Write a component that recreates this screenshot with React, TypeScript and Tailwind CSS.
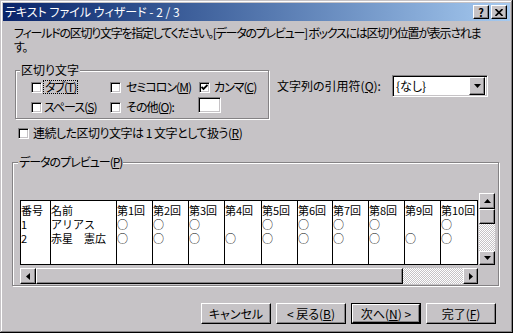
const raised =
  'box-border border border-t-white border-l-white border-b-black border-r-black bg-[#c6c3c6] shadow-[inset_-1px_-1px_#848284]';
const sunken =
  'box-border border border-t-[#848284] border-l-[#848284] border-b-white border-r-white bg-white shadow-[inset_1px_1px_#000,inset_-1px_-1px_#c6c3c6]';
const etched = 'box-border border border-[#848284] shadow-[1px_1px_#fff,inset_1px_1px_#fff]';
const dither =
  'bg-[repeating-conic-gradient(#fff_0_25%,#c6c3c6_0_50%)] bg-[length:2px_2px]';

function Check({ checked }: { checked?: boolean }) {
  return (
    <span className={`${sunken} flex h-[11px] w-[11px] shrink-0 items-center justify-center`}>
      {checked && (
        <svg width="7" height="7" viewBox="0 0 7 7">
          <path d="M0.5 3 L2.5 5 L6.5 1" stroke="#000" strokeWidth="1.8" fill="none" />
        </svg>
      )}
    </span>
  );
}

function Label({ text, u, rest }: { text: string; u: string; rest: string }) {
  return (
    <span className="whitespace-nowrap">
      {text}(<span className="underline">{u}</span>){rest}
    </span>
  );
}

function Tri({ dir }: { dir: 'up' | 'down' | 'left' | 'right' }) {
  const pts = {
    up: '3.5,0 7,4 0,4',
    down: '0,0 7,0 3.5,4',
    left: '4,0 4,7 0,3.5',
    right: '0,0 4,3.5 0,7',
  }[dir];
  const horizontal = dir === 'up' || dir === 'down';
  return (
    <svg width={horizontal ? 7 : 4} height={horizontal ? 4 : 7} viewBox={horizontal ? '0 0 7 4' : '0 0 4 7'}>
      <polygon points={pts} fill="#000" />
    </svg>
  );
}

const cols = [
  { w: 'w-[29px]', head: '番号', r1: '1', r2: '2' },
  { w: 'w-[66px]', head: '名前', r1: 'アリアス', r2: '赤星　憲広' },
  { w: 'w-[36px]', head: '第1回', r1: '○', r2: '○' },
  { w: 'w-[36px]', head: '第2回', r1: '○', r2: '○' },
  { w: 'w-[36px]', head: '第3回', r1: '○', r2: '○' },
  { w: 'w-[37px]', head: '第4回', r1: '', r2: '○' },
  { w: 'w-[36px]', head: '第5回', r1: '○', r2: '○' },
  { w: 'w-[35px]', head: '第6回', r1: '○', r2: '○' },
  { w: 'w-[36px]', head: '第7回', r1: '○', r2: '○' },
  { w: 'w-[36px]', head: '第8回', r1: '○', r2: '○' },
  { w: 'w-[36px]', head: '第9回', r1: '', r2: '○' },
  { w: 'w-[37px]', head: '第10回', r1: '○', r2: '○' },
];

export default function App() {
  return (
    <div className="box-border h-[333px] w-[513px] overflow-hidden bg-[#c6c3c6] p-[3px] font-['Noto_Sans_CJK_JP',sans-serif] text-[12px] leading-[14px] text-black shadow-[inset_-1px_-1px_#000,inset_1px_1px_#c6c3c6,inset_-2px_-2px_#848284,inset_2px_2px_#fff] [font-feature-settings:'palt']">
      {/* Title bar */}
      <div className="flex h-[18px] items-center bg-gradient-to-r from-[#0a246a] to-[#a6caf0] pr-[3px] pl-[2px]">
        <span className="flex-1 whitespace-nowrap text-white">テキスト ファイル ウィザード - 2 / 3</span>
        <div className={`${raised} flex h-[14px] w-[16px] items-center justify-center text-[11px] font-bold leading-none`}>?</div>
        <div className={`${raised} ml-[2px] flex h-[14px] w-[16px] items-center justify-center`}>
          <svg width="8" height="7" viewBox="0 0 8 7">
            <path d="M0.5 0 L7.5 7 M7.5 0 L0.5 7" stroke="#000" strokeWidth="1.6" />
          </svg>
        </div>
      </div>

      {/* Instruction */}
      <p className="mt-[5px] ml-[11px] whitespace-nowrap tracking-[-1.25px]">
        フィールドの区切り文字を指定してください。[データのプレビュー] ボックスには区切り位置が表示されま
        <br />
        す。
      </p>

      {/* Delimiters + quote */}
      <div className="mt-[16px] flex">
        <div className={`${etched} relative ml-[12px] h-[49px] w-[254px] tracking-[-1px]`}>
          <span className="absolute -top-[8px] left-[4px] bg-[#c6c3c6] px-[1px] tracking-normal">区切り文字</span>
          <div className="grid grid-cols-[79px_89px_80px] pt-[9px] pl-[15px]">
            <div className="flex h-[14px] items-center gap-[1px]">
              <Check />
              <span className="border border-dotted border-black px-[1px] leading-[12px]">
                <Label text="タブ" u="T" rest="" />
              </span>
            </div>
            <div className="flex h-[14px] items-center gap-[5px]">
              <Check />
              <Label text="セミコロン" u="M" rest="" />
            </div>
            <div className="flex h-[14px] items-center gap-[4px]">
              <Check checked />
              <Label text="カンマ" u="C" rest="" />
            </div>
            <div className="mt-[6px] flex h-[14px] items-center gap-[2px]">
              <Check />
              <Label text="スペース" u="S" rest="" />
            </div>
            <div className="mt-[6px] flex h-[14px] items-center gap-[5px]">
              <Check />
              <Label text="その他" u="O" rest=":" />
            </div>
            <div className={`${sunken} mt-[3px] -ml-[1px] h-[16px] w-[23px]`} />
          </div>
        </div>

        <div className="mt-[5px] ml-[8px] flex h-[22px] items-center">
          <span className="w-[115px]">
            <Label text="文字列の引用符" u="Q" rest=":" />
          </span>
          <div className={`${sunken} flex h-[22px] w-[96px] items-center justify-between pr-[2px] pl-[3px]`}>
            <span>{'{なし}'}</span>
            <div className={`${raised} flex h-[18px] w-[16px] items-center justify-center`}>
              <Tri dir="down" />
            </div>
          </div>
        </div>
      </div>

      {/* Consecutive delimiters */}
      <div className="mt-[7px] ml-[15px] flex h-[14px] items-center gap-[4px] tracking-[-0.5px]">
        <Check />
        <Label text="連続した区切り文字は 1 文字として扱う" u="R" rest="" />
      </div>

      {/* Preview */}
      <div className={`${etched} relative mt-[22px] ml-[9px] h-[124px] w-[487px]`}>
        <span className="absolute -top-[8px] left-[5px] bg-[#c6c3c6] px-[1px] tracking-[-1px]">
          <Label text="データのプレビュー" u="P" rest="" />
        </span>
        <div className="flex items-end gap-[1px] pt-[30px] pl-[7px]">
          <div className="box-border flex h-[65px] w-[458px] border border-black bg-white text-[11px] [font-feature-settings:normal]">
            {cols.map((c, i) => (
              <div
                key={c.head}
                className={`${c.w} box-border shrink-0 overflow-hidden pt-[2px] whitespace-nowrap ${i > 0 ? 'border-l border-black' : ''}`}
              >
                <div className="h-[14px]">{c.head}</div>
                <div className="h-[14px]">{c.r1}</div>
                <div className="h-[14px]">{c.r2}</div>
              </div>
            ))}
          </div>
          <div className="flex h-[72px] w-[16px] flex-col">
            <div className={`${raised} flex h-[16px] items-center justify-center`}>
              <Tri dir="up" />
            </div>
            <div className={`${raised} h-[15px]`} />
            <div className={`${dither} flex-1`} />
            <div className={`${raised} flex h-[14px] items-center justify-center`}>
              <Tri dir="down" />
            </div>
          </div>
        </div>
        <div className="mt-[3px] ml-[7px] flex h-[16px] w-[458px]">
          <div className={`${raised} flex w-[16px] items-center justify-center`}>
            <Tri dir="left" />
          </div>
          <div className={`${raised} w-[367px]`} />
          <div className={`${dither} flex-1`} />
          <div className={`${raised} flex w-[15px] items-center justify-center`}>
            <Tri dir="right" />
          </div>
        </div>
      </div>

      {/* Buttons */}
      <div className="mt-[17px] flex justify-end gap-[5px] pr-[14px]">
        <button className={`${raised} h-[21px] w-[70px]`}>キャンセル</button>
        <button className={`${raised} h-[21px] w-[70px]`}>
          &lt; 戻る(<span className="underline">B</span>)
        </button>
        <div className="box-border h-[21px] w-[70px] border border-black">
          <button className={`${raised} h-full w-full`}>
            次へ(<span className="underline">N</span>) &gt;
          </button>
        </div>
        <button className={`${raised} h-[21px] w-[70px]`}>
          完了(<span className="underline">F</span>)
        </button>
      </div>
    </div>
  );
}
